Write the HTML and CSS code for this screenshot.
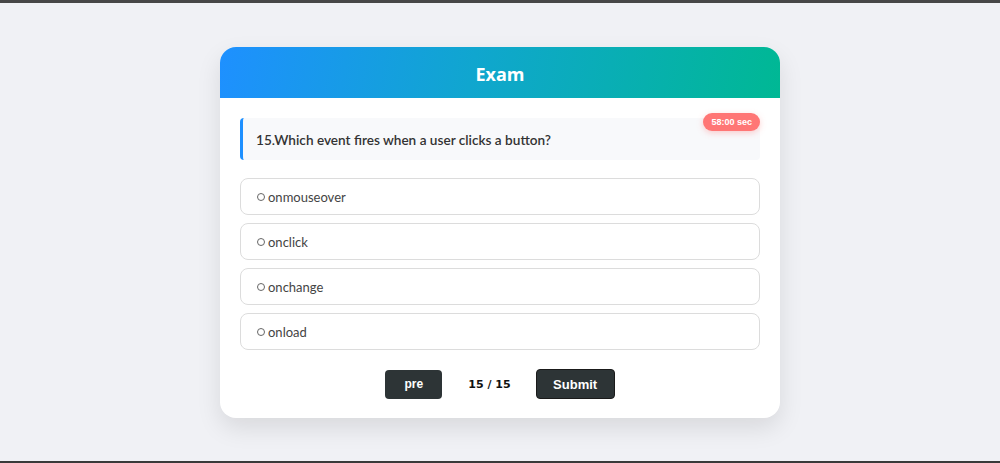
FILE: index.html
```html
<!DOCTYPE html>
<html>
<head>
<meta charset="utf-8">
<link rel="stylesheet" href="styles.css">
</head>
<body>
<div class="topbar"></div>
<main class="stage">
  <section class="card">
    <header class="card-head">Exam</header>
    <div class="card-body">
      <div class="question">
        <span class="timer">58:00 sec</span>
        <p>15.Which event fires when a user clicks a button?</p>
      </div>
      <ul class="options">
        <li class="option"><span class="radio"></span>onmouseover</li>
        <li class="option"><span class="radio"></span>onclick</li>
        <li class="option"><span class="radio"></span>onchange</li>
        <li class="option"><span class="radio"></span>onload</li>
      </ul>
      <div class="nav">
        <button class="btn btn-pre">pre</button>
        <span class="count">15 / 15</span>
        <button class="btn btn-submit">Submit</button>
      </div>
    </div>
  </section>
</main>
<div class="bottombar"></div>
</body>
</html>
```
FILE: styles.css
```css
* { box-sizing: border-box; }
html, body { margin: 0; padding: 0; }
body {
  height: 463px;
  background: #f0f1f5;
  font-family: "Lato", "Open Sans", sans-serif;
  display: flex;
  flex-direction: column;
  overflow: hidden;
}
.topbar { height: 3px; background: #474747; flex: none; }
.bottombar { height: 2px; background: #3a3a3a; flex: none; }
.stage {
  flex: 1;
  display: flex;
  justify-content: center;
  align-items: flex-start;
  padding-top: 44px;
}
.card {
  width: 560px;
  background: #fff;
  border-radius: 16px;
  box-shadow: 0 10px 25px rgba(0,0,0,0.1);
  overflow: hidden;
}
.card-head {
  height: 51px;
  background: linear-gradient(100deg, #1e90ff 0%, #10a6cf 45%, #00b894 100%);
  color: #fff;
  font-family: "Open Sans", sans-serif;
  font-weight: 700;
  font-size: 18px;
  display: flex;
  align-items: center;
  justify-content: center;
  padding-top: 2px;
}
.card-body {
  padding: 20px 20px 19px;
}
.question {
  position: relative;
  height: 42px;
  background: #f8f9fb;
  border-left: 3px solid #1e90ff;
  border-radius: 4px;
  display: flex;
  align-items: center;
  padding-left: 13px;
}
.question p {
  margin: 0;
  font-size: 13.6px;
  font-weight: 600;
  color: #333;
  padding-top: 1px;
}
.timer {
  position: absolute;
  top: -5px;
  right: 0;
  height: 18px;
  padding: 0 8px;
  border-radius: 9px;
  background: #ff7675;
  color: #fff;
  font-family: "Liberation Sans", Arial, sans-serif;
  font-weight: 700;
  font-size: 9px;
  display: flex;
  align-items: center;
  box-shadow: 0 2px 6px rgba(255,118,117,0.35);
}
.options {
  list-style: none;
  margin: 18px 0 0;
  padding: 0;
  display: flex;
  flex-direction: column;
  gap: 8px;
}
.option {
  height: 37px;
  border: 1px solid #dcdcdc;
  border-radius: 8px;
  display: flex;
  align-items: center;
  padding-left: 16px;
  font-size: 13px;
  color: #444;
}
.radio {
  width: 8px;
  height: 8px;
  border: 1px solid #666;
  border-radius: 50%;
  margin-right: 3px;
  margin-top: 1px;
}
.nav {
  margin-top: 19px;
  display: flex;
  justify-content: center;
  align-items: center;
}
.btn {
  background: #2d3436;
  color: #fff;
  font-family: "Liberation Sans", Arial, sans-serif;
  font-weight: 700;
  border-radius: 4px;
  cursor: pointer;
}
.btn-pre {
  width: 57px;
  height: 29px;
  border: none;
  font-size: 12px;
}
.btn-submit {
  width: 79px;
  height: 30px;
  border: 1px solid #1a1a1a;
  font-size: 13px;
}
.count {
  font-family: "DejaVu Sans", sans-serif;
  font-weight: 700;
  font-size: 11px;
  color: #111;
  margin: 0 25px 0 26px;
}
```
